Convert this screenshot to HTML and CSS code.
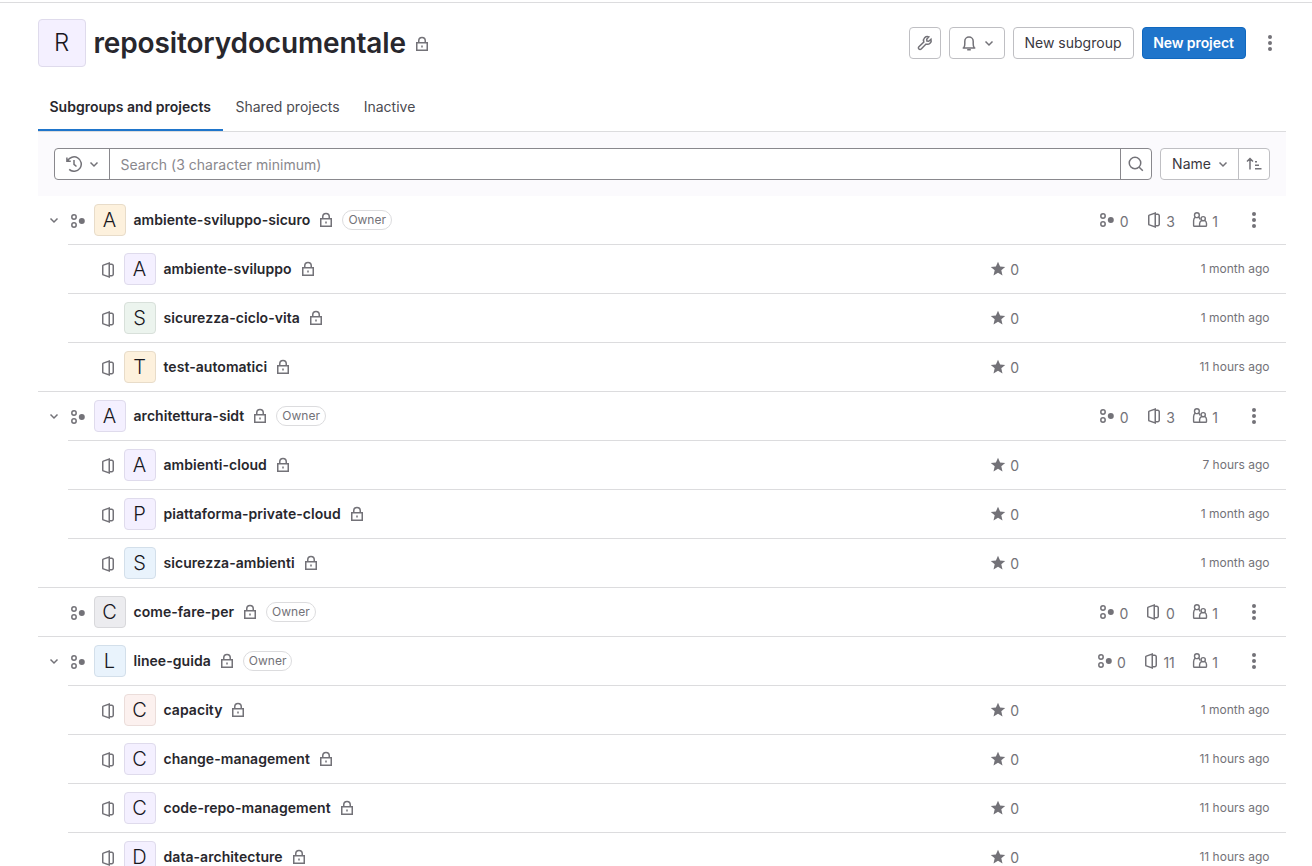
FILE: index.html
```html
<!DOCTYPE html>
<html lang="en">
<head>
<meta charset="utf-8">
<title>repositorydocumentale</title>
<link rel="stylesheet" href="styles.css">
</head>
<body>
<svg class="sprite" aria-hidden="true">
  <symbol id="lock" viewBox="0 0 16 16"><path d="M2.75 6.75h10.5v7.5H2.75zM4.75 6.75v-2a3.25 3.25 0 0 1 6.5 0v2M8 9.5v2"/></symbol>
  <symbol id="subgroup" viewBox="0 0 16 16"><circle cx="4" cy="4" r="2.2"/><circle cx="4" cy="12" r="2.2"/><circle cx="11.8" cy="8" r="3" class="solid"/></symbol>
  <symbol id="project" viewBox="0 0 16 16"><path d="M9.25 1.1v13.8L3.3 12.9a.8.8 0 0 1-.55-.75v-8.3a.8.8 0 0 1 .55-.75zM9.25 2.25h2.500a1.500 1.500 0 0 1 1.500 1.500v8.500a1.500 1.500 0 0 1-1.500 1.500h-2.500"/></symbol>
  <symbol id="users" viewBox="0 0 16 16"><g stroke-width="1.4"><circle cx="4.900" cy="3.200" r="2.400"/><path d="M3.200 5C2.100 6 1.600 7.300 1.600 8.700v4.800c0 .5.3.8.8.8h5.200M6.600 5c.8.7 1.300 1.500 1.500 2.500"/><circle cx="11.200" cy="6.700" r="2.100"/><path d="M9.700 8.300C8.300 9.200 7.600 10.200 7.600 11.500v2.750h6c.5 0 .9-.3.9-.8v-2c0-1.300-.6-2.400-1.800-3.200"/></g></symbol>
  <symbol id="star" viewBox="0 0 16 16"><path class="solid" d="M8 .7l2.100 4.700 5.100.5-3.900 3.400 1.200 5.200L8 11.800l-4.500 2.700 1.200-5.200L.8 5.900l5.100-.5z"/></symbol>
  <symbol id="chevron" viewBox="0 0 16 16"><path d="M4.500 6.500 8 10l3.500-3.500"/></symbol>
  <symbol id="dots" viewBox="0 0 16 16"><circle class="solid" cx="8" cy="2" r="2"/><circle class="solid" cx="8" cy="8" r="2"/><circle class="solid" cx="8" cy="14" r="2"/></symbol>
  <symbol id="wrench" viewBox="0 0 16 16"><path d="M14 4.200 11.700 6.300 9.900 6 9.700 4.200 11.800 1.900A3.900 3.900 0 0 0 6.800 7L1.900 11.700a1.600 1.600 0 0 0 0 2.300 1.600 1.600 0 0 0 2.300 0L9 9.100A3.900 3.900 0 0 0 14 4.200z"/></symbol>
  <symbol id="bell" viewBox="0 0 16 16"><path d="M1.700 13h12.600M2.900 12.700c.7-1.300.9-2.500.9-4V6.250a4.200 4.200 0 0 1 8.400 0V8.700c0 1.500.2 2.700.9 4M6.200 14.700h3.600"/></symbol>
  <symbol id="history" viewBox="0 0 16 16"><path d="M.9 1.500v3.750h3.850M1.500 5.100A7.200 7.200 0 1 1 3.200 13.400M8 4v4.300l2.500 2.200"/></symbol>
  <symbol id="search" viewBox="0 0 16 16"><circle cx="7" cy="7" r="5.750"/><path d="m11.200 11.200 3.600 3.600"/></symbol>
  <symbol id="sort" viewBox="0 0 16 16"><path d="M4 13.500V3M1 5.500l3-3 3 3M9 5.750h2M9 9.250h4M9 12.750h6.500"/></symbol>
</svg>
<main class="page">
  <header class="header">
    <span class="avatar avatar-lg purple">R</span>
    <h1 class="title">repositorydocumentale</h1>
    <svg class="icon"><use href="#lock"/></svg>
    <div class="actions">
      <button class="btn btn-icon"><svg class="icon"><use href="#wrench"/></svg></button>
      <button class="btn btn-bell"><svg class="icon"><use href="#bell"/></svg><svg class="icon"><use href="#chevron"/></svg></button>
      <button class="btn btn-subgroup">New subgroup</button>
      <button class="btn btn-primary">New project</button>
      <button class="more"><svg class="icon"><use href="#dots"/></svg></button>
    </div>
  </header>
  <nav class="tabs">
    <a class="tab active">Subgroups and projects</a>
    <a class="tab">Shared projects</a>
    <a class="tab">Inactive</a>
  </nav>
  <section class="filter">
    <div class="searchbox">
      <button class="history"><svg class="icon"><use href="#history"/></svg><svg class="icon"><use href="#chevron"/></svg></button>
      <span class="placeholder">Search (3 character minimum)</span>
      <button class="go"><svg class="icon"><use href="#search"/></svg></button>
    </div>
    <div class="sorter">
      <button class="sort-name">Name<svg class="icon"><use href="#chevron"/></svg></button>
      <button class="sort-dir"><svg class="icon"><use href="#sort"/></svg></button>
    </div>
  </section>
  <ul class="list">
    <li class="row">
      <svg class="icon toggle"><use href="#chevron"/></svg><svg class="icon kind"><use href="#subgroup"/></svg><span class="avatar orange">A</span><a class="name">ambiente-sviluppo-sicuro</a><svg class="icon"><use href="#lock"/></svg><span class="badge">Owner</span>
      <div class="stats"><span class="stat"><svg class="icon"><use href="#subgroup"/></svg>0</span><span class="stat"><svg class="icon"><use href="#project"/></svg>3</span><span class="stat"><svg class="icon"><use href="#users"/></svg>1</span></div>
      <button class="more"><svg class="icon"><use href="#dots"/></svg></button>
    </li>
    <li class="row child"><svg class="icon kind"><use href="#project"/></svg><span class="avatar purple">A</span><a class="name">ambiente-sviluppo</a><svg class="icon"><use href="#lock"/></svg><span class="stars"><svg class="icon"><use href="#star"/></svg>0</span><time class="time">1 month ago</time></li>
    <li class="row child"><svg class="icon kind"><use href="#project"/></svg><span class="avatar green">S</span><a class="name">sicurezza-ciclo-vita</a><svg class="icon"><use href="#lock"/></svg><span class="stars"><svg class="icon"><use href="#star"/></svg>0</span><time class="time">1 month ago</time></li>
    <li class="row child"><svg class="icon kind"><use href="#project"/></svg><span class="avatar orange">T</span><a class="name">test-automatici</a><svg class="icon"><use href="#lock"/></svg><span class="stars"><svg class="icon"><use href="#star"/></svg>0</span><time class="time">11 hours ago</time></li>
    <li class="row">
      <svg class="icon toggle"><use href="#chevron"/></svg><svg class="icon kind"><use href="#subgroup"/></svg><span class="avatar purple">A</span><a class="name">architettura-sidt</a><svg class="icon"><use href="#lock"/></svg><span class="badge">Owner</span>
      <div class="stats"><span class="stat"><svg class="icon"><use href="#subgroup"/></svg>0</span><span class="stat"><svg class="icon"><use href="#project"/></svg>3</span><span class="stat"><svg class="icon"><use href="#users"/></svg>1</span></div>
      <button class="more"><svg class="icon"><use href="#dots"/></svg></button>
    </li>
    <li class="row child"><svg class="icon kind"><use href="#project"/></svg><span class="avatar purple">A</span><a class="name">ambienti-cloud</a><svg class="icon"><use href="#lock"/></svg><span class="stars"><svg class="icon"><use href="#star"/></svg>0</span><time class="time">7 hours ago</time></li>
    <li class="row child"><svg class="icon kind"><use href="#project"/></svg><span class="avatar purple">P</span><a class="name">piattaforma-private-cloud</a><svg class="icon"><use href="#lock"/></svg><span class="stars"><svg class="icon"><use href="#star"/></svg>0</span><time class="time">1 month ago</time></li>
    <li class="row child"><svg class="icon kind"><use href="#project"/></svg><span class="avatar blue">S</span><a class="name">sicurezza-ambienti</a><svg class="icon"><use href="#lock"/></svg><span class="stars"><svg class="icon"><use href="#star"/></svg>0</span><time class="time">1 month ago</time></li>
    <li class="row">
      <span class="icon toggle"></span><svg class="icon kind"><use href="#subgroup"/></svg><span class="avatar gray">C</span><a class="name">come-fare-per</a><svg class="icon"><use href="#lock"/></svg><span class="badge">Owner</span>
      <div class="stats"><span class="stat"><svg class="icon"><use href="#subgroup"/></svg>0</span><span class="stat"><svg class="icon"><use href="#project"/></svg>0</span><span class="stat"><svg class="icon"><use href="#users"/></svg>1</span></div>
      <button class="more"><svg class="icon"><use href="#dots"/></svg></button>
    </li>
    <li class="row">
      <svg class="icon toggle"><use href="#chevron"/></svg><svg class="icon kind"><use href="#subgroup"/></svg><span class="avatar blue">L</span><a class="name">linee-guida</a><svg class="icon"><use href="#lock"/></svg><span class="badge">Owner</span>
      <div class="stats"><span class="stat"><svg class="icon"><use href="#subgroup"/></svg>0</span><span class="stat"><svg class="icon"><use href="#project"/></svg>11</span><span class="stat"><svg class="icon"><use href="#users"/></svg>1</span></div>
      <button class="more"><svg class="icon"><use href="#dots"/></svg></button>
    </li>
    <li class="row child"><svg class="icon kind"><use href="#project"/></svg><span class="avatar red">C</span><a class="name">capacity</a><svg class="icon"><use href="#lock"/></svg><span class="stars"><svg class="icon"><use href="#star"/></svg>0</span><time class="time">1 month ago</time></li>
    <li class="row child"><svg class="icon kind"><use href="#project"/></svg><span class="avatar purple">C</span><a class="name">change-management</a><svg class="icon"><use href="#lock"/></svg><span class="stars"><svg class="icon"><use href="#star"/></svg>0</span><time class="time">11 hours ago</time></li>
    <li class="row child"><svg class="icon kind"><use href="#project"/></svg><span class="avatar purple">C</span><a class="name">code-repo-management</a><svg class="icon"><use href="#lock"/></svg><span class="stars"><svg class="icon"><use href="#star"/></svg>0</span><time class="time">11 hours ago</time></li>
    <li class="row child"><svg class="icon kind"><use href="#project"/></svg><span class="avatar purple">D</span><a class="name">data-architecture</a><svg class="icon"><use href="#lock"/></svg><span class="stars"><svg class="icon"><use href="#star"/></svg>0</span><time class="time">11 hours ago</time></li>
  </ul>
</main>
</body>
</html>
```
FILE: styles.css
```css
* { box-sizing: border-box; }
html, body { height: 100%; }
body { margin: 0; overflow: hidden; background: #fff; color: #28272d; font: 14px/20px Inter, "Liberation Sans", sans-serif; }
button { font: inherit; color: inherit; margin: 0; padding: 0; border: 0; background: none; }
.sprite { display: none; }
.icon { width: 16px; height: 16px; flex: none; overflow: visible; fill: none; stroke: #737278; stroke-width: 1.5; }
.solid { fill: #737278; stroke: none; }

.page { margin-top: 2px; border-top: 1px solid #dcdcde; padding: 16px 26px 0 38px; }
.header { display: flex; align-items: center; height: 48px; }
.header > .icon { margin-top: 2px; margin-left: 8px; }
.title { margin: 0 0 0 7.5px; font-size: 28px; line-height: 36px; font-weight: 600; letter-spacing: -0.14px; }
.actions { display: flex; gap: 8px; margin-left: auto; }
.btn { display: flex; align-items: center; justify-content: center; height: 32px; border: 1px solid #bfbfc3; border-radius: 4px; background: #fff; color: #3a383f; white-space: nowrap; }
.btn-icon { width: 32px; }
.btn-bell { width: 56px; padding-left: 4px; gap: 4px; }
.btn-subgroup { width: 121px; padding-right: 1px; }
.btn-primary { width: 104px; padding-right: 1px; background: #1f75cb; border-color: #1068bf; color: #fff; font-weight: 600; letter-spacing: -0.08px; }
.more { display: flex; align-items: center; justify-content: center; width: 32px; height: 32px; }

.tabs { display: flex; height: 65px; border-bottom: 1px solid #dcdcde; padding-top: 17px; }
.tab { display: block; height: 47px; padding: 13px 12px 0; color: #4c4b51; }
.tab.active { padding: 13px 12.5px 0 11.5px; color: #28272d; font-weight: 600; border-bottom: 2px solid #1f75cb; }

.filter { display: flex; gap: 8px; padding: 16px; height: 64px; background: #fbfafd; }
.searchbox { display: flex; flex: 1; height: 32px; border: 1px solid #89888d; border-radius: 4px; background: #fff; }
.history { display: flex; align-items: center; justify-content: center; gap: 4px; width: 55px; padding-left: 4px; border-right: 1px solid #89888d; }
.placeholder { flex: 1; padding: 6px 10.5px; color: #89888d; letter-spacing: 0.02px; }
.go { display: flex; align-items: center; justify-content: center; width: 31px; border-left: 1px solid #89888d; }
.sorter { display: flex; width: 110px; height: 32px; border: 1px solid #bfbfc3; border-radius: 4px; background: #fff; color: #3a383f; }
.sort-name { display: flex; align-items: center; justify-content: center; gap: 4px; flex: 1; padding-left: 4px; }
.sort-dir { display: flex; align-items: center; justify-content: center; width: 31px; border-left: 1px solid #bfbfc3; }

.list { list-style: none; margin: 0; padding: 0; }
.row { display: flex; align-items: center; gap: 8px; height: 49px; border-top: 1px solid #dcdcde; padding: 0 16px 0 8px; }
.row:first-child { height: 48px; border-top: 0; }
.row.child { margin-left: 30px; padding-left: 32px; }
.kind { margin-top: 2px; }
.avatar { display: flex; align-items: center; justify-content: center; flex: none; width: 32px; height: 32px; padding-right: 1px; border: 1px solid; border-radius: 4px; font-size: 20px; font-weight: 300; color: #18171d; }
.avatar-lg { width: 48px; height: 48px; font-size: 24px; }
.purple { background: #f4f0ff; border-color: #dfdbec; }
.orange { background: #fdf1dd; border-color: #e8dcc9; }
.green { background: #ecf4ee; border-color: #d8e0da; }
.blue { background: #e9f3fc; border-color: #d3dfea; }
.gray { background: #ececef; border-color: #d8d8db; }
.red { background: #fcf1ef; border-color: #ebddda; }
.name { margin-left: -0.5px; font-weight: 600; letter-spacing: 0.05px; }
.badge { height: 20px; padding: 0 5px; border: 1px solid #dcdcde; border-radius: 10px; font-size: 12px; line-height: 18px; color: #737278; }
.stats { display: flex; margin-left: auto; gap: 17px; margin-right: 12px; color: #737278; }
.stat { display: flex; gap: 4.5px; line-height: 20px; height: 16px; }
.stars { display: flex; gap: 4px; height: 16px; line-height: 18px; margin-left: auto; color: #737278; }
.time { width: 243px; padding-right: 0.5px; text-align: right; font-size: 12px; color: #737278; }
```
